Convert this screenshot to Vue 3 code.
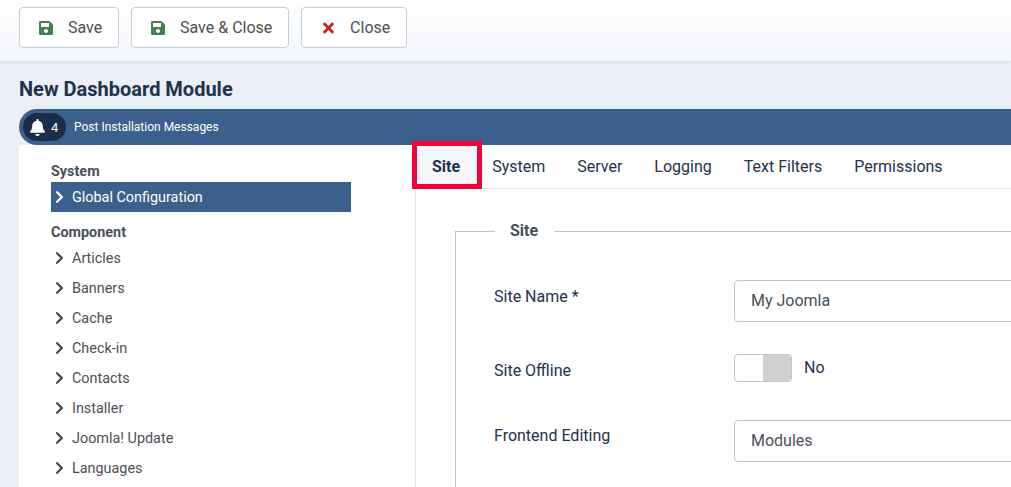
<script setup>
const save = 'M433.941 129.941l-83.882-83.882A48 48 0 0 0 316.118 32H48C21.49 32 0 53.49 0 80v352c0 26.51 21.49 48 48 48h352c26.51 0 48-21.49 48-48V163.882a48 48 0 0 0-14.059-33.941zM224 416c-35.346 0-64-28.654-64-64 0-35.346 28.654-64 64-64s64 28.654 64 64c0 35.346-28.654 64-64 64zm96-304.52V212c0 6.627-5.373 12-12 12H76c-6.627 0-12-5.373-12-12V108c0-6.627 5.373-12 12-12h228.52c3.183 0 6.235 1.264 8.485 3.515l3.48 3.48A11.996 11.996 0 0 1 320 111.48z'
const chevron = 'M285.476 272.971L91.132 467.314c-9.373 9.373-24.569 9.373-33.941 0l-22.667-22.667c-9.357-9.357-9.375-24.522-.04-33.901L188.505 256 34.484 101.255c-9.335-9.379-9.317-24.544.04-33.901l22.667-22.667c9.373-9.373 24.569-9.373 33.941 0L285.475 239.03c9.373 9.372 9.373 24.568.001 33.941z'
const components = ['Articles', 'Banners', 'Cache', 'Check-in', 'Contacts', 'Installer', 'Joomla! Update', 'Languages']
const tabs = ['Site', 'System', 'Server', 'Logging', 'Text Filters', 'Permissions']
</script>

<template>
  <div class="page">
    <header class="toolbar">
      <button class="btn">
        <svg class="ic-save" viewBox="0 0 448 512"><path :d="save" /></svg>
        <span>Save</span>
      </button>
      <button class="btn">
        <svg class="ic-save" viewBox="0 0 448 512"><path :d="save" /></svg>
        <span>Save &amp; Close</span>
      </button>
      <button class="btn">
        <svg class="ic-close" viewBox="0 0 352 512"><path d="M242.72 256l100.07-100.07c12.28-12.28 12.28-32.19 0-44.48l-22.24-22.24c-12.28-12.28-32.19-12.28-44.48 0L176 189.28 75.93 89.21c-12.28-12.28-32.19-12.28-44.48 0L9.21 111.45c-12.28 12.28-12.28 32.19 0 44.48L109.28 256 9.21 356.07c-12.28 12.28-12.28 32.19 0 44.48l22.24 22.24c12.28 12.28 32.2 12.28 44.48 0L176 322.72l100.07 100.07c12.28 12.28 32.2 12.28 44.48 0l22.24-22.24c12.28-12.28 12.28-32.19 0-44.48L242.72 256z" /></svg>
        <span>Close</span>
      </button>
    </header>

    <h1 class="title">New Dashboard Module</h1>

    <div class="content">
      <div class="msgbar">
        <div class="badge">
          <svg class="ic-bell" viewBox="0 0 448 512"><path d="M224 512c35.32 0 63.97-28.65 63.97-64H160.03c0 35.35 28.65 64 63.97 64zm215.39-149.71c-19.32-20.76-55.47-51.99-55.47-154.29 0-77.7-54.48-139.9-127.94-155.16V32c0-17.67-14.32-32-31.98-32s-31.98 14.33-31.98 32v20.84C118.56 68.1 64.08 130.3 64.08 208c0 102.3-36.15 133.53-55.47 154.29-6 6.45-8.66 14.16-8.61 21.71.11 16.4 12.98 32 32.1 32h383.8c19.12 0 32-15.6 32.1-32 .05-7.55-2.61-15.27-8.61-21.71z" /></svg>
          <span>4</span>
        </div>
        <span class="msgtext">Post Installation Messages</span>
      </div>

      <div class="card">
        <aside class="sidebar">
          <div class="group first">System</div>
          <div class="item active">
            <svg class="ic-chev" viewBox="0 0 320 512"><path :d="chevron" /></svg>
            <span>Global Configuration</span>
          </div>
          <div class="group">Component</div>
          <div v-for="c in components" :key="c" class="item">
            <svg class="ic-chev" viewBox="0 0 320 512"><path :d="chevron" /></svg>
            <span>{{ c }}</span>
          </div>
        </aside>

        <main class="main">
          <nav class="tabs">
            <div v-for="(t, i) in tabs" :key="t" class="tab" :class="{ current: i === 0 }">
              {{ t }}
              <span v-if="i === 0" class="redbox"></span>
            </div>
          </nav>

          <fieldset class="fs">
            <legend>Site</legend>
            <div class="row r1">
              <label>Site Name *</label>
              <div class="input">My Joomla</div>
            </div>
            <div class="row r2">
              <label>Site Offline</label>
              <div class="switchwrap">
                <div class="switch"><i></i></div>
                <span>No</span>
              </div>
            </div>
            <div class="row r3">
              <label>Frontend Editing</label>
              <div class="input">Modules</div>
            </div>
          </fieldset>
        </main>
      </div>
    </div>
  </div>
</template>

<style>
html, body { margin: 0; overflow: hidden; }
</style>

<style scoped>
.page {
  width: 1011px;
  height: 487px;
  overflow: hidden;
  background: #ebf0f6;
  font-family: Roboto, sans-serif;
  font-size: 16px;
  color: #22314d;
}
.toolbar {
  height: 61px;
  box-sizing: border-box;
  padding: 7px 19px 0;
  display: flex;
  gap: 12px;
  background: linear-gradient(180deg, #ffffff 0%, #f3f6fa 100%);
  box-shadow: 0 1px 4px rgba(60, 90, 130, 0.16);
}
.btn {
  height: 41px;
  box-sizing: border-box;
  display: flex;
  align-items: center;
  gap: 15px;
  padding: 0 15.8px 0 19px;
  background: #fff;
  border: 1px solid #c3ccd9;
  border-radius: 4px;
  color: #495057;
  font: 400 16px Roboto, sans-serif;
}
.ic-save { width: 14px; height: 16px; fill: #457d54; flex: none; }
.ic-close { width: 11px; height: 16px; fill: #c52827; margin: 0 1.5px; flex: none; }
.title {
  margin: 0;
  height: 48px;
  padding: 16px 19px 0;
  box-sizing: border-box;
  font-size: 20px;
  line-height: 24px;
  font-weight: 700;
  color: #22314d;
}
.content {
  margin-left: 19px;
}
.msgbar {
  height: 36px;
  background: #3c608e;
  border-radius: 18px 0 0 18px;
  display: flex;
  align-items: center;
  padding-left: 4px;
  gap: 8px;
  color: #fff;
}
.badge {
  width: 43px;
  height: 28px;
  box-sizing: border-box;
  padding-left: 7px;
  border-radius: 14px;
  background: #1c2d4a;
  display: flex;
  align-items: center;
  gap: 6px;
  font-size: 13px;
}
.ic-bell { width: 15px; height: 17px; fill: #fff; }
.msgtext { font-size: 12px; }
.card {
  display: flex;
  background: #fff;
  border-radius: 4px 0 0 0;
  height: 400px;
}
.sidebar {
  width: 397px;
  flex: none;
  box-sizing: border-box;
  padding: 16px 64px 0 32px;
  border-right: 1px solid #dbe3ee;
  color: #495057;
  font-size: 14.4px;
}
.group {
  font-weight: 700;
  height: 20px;
  line-height: 22px;
  margin-top: 10px;
}
.group.first { margin-top: 0; height: 21px; line-height: 22px; }
.item {
  height: 30px;
  display: flex;
  align-items: center;
  padding-left: 4px;
  gap: 8px;
}
.group + .item:not(.active) { margin-top: 1px; margin-bottom: 0; }
.item.active { background: #3c608e; color: #fff; }
.ic-chev { width: 9px; height: 14px; fill: #3f4a5a; flex: none; }
.item.active .ic-chev { fill: #fff; }
.main {
  flex: 1;
  min-width: 0;
}
.tabs {
  display: flex;
  height: 43px;
  border-bottom: 1px solid #dbe3ee;
  padding-left: 1px;
}
.tab {
  position: relative;
  padding: 0 16px;
  line-height: 43px;
  color: #22314d;
}
.tab.current {
  padding: 0 16px 0 15px;
  background: #f4f7fa;
  font-weight: 700;
}
.redbox {
  position: absolute;
  left: -5px;
  right: -5.6px;
  top: -4px;
  bottom: -1px;
  border: 5px solid #f5003a;
  pointer-events: none;
}
.fs {
  margin: 32px 0 0 39px;
  padding: 0 0 0 38px;
  width: 700px;
  min-width: 700px;
  border: 1px solid #b8c5dc;
  border-right: 0;
  height: 400px;
  box-sizing: border-box;
}
legend {
  padding: 0 15.6px 0 15px;
  margin-left: 1px;
  font-weight: 700;
  color: #495057;
  line-height: 20px;
}
.row {
  display: flex;
}
.row label {
  width: 240px;
  flex: none;
  color: #22314d;
}
.r1 { margin-top: 39px; height: 42px; }
.r1 label { line-height: 34px; }
.r2 { margin-top: 32px; height: 28px; }
.r2 label { line-height: 34px; }
.r3 { margin-top: 38px; height: 42px; }
.r3 label { line-height: 32px; }
.input {
  width: 500px;
  height: 42px;
  box-sizing: border-box;
  border: 1px solid #b8c5dc;
  border-radius: 4px;
  padding: 0 16px;
  line-height: 40px;
  color: #495057;
}
.switchwrap {
  display: flex;
  align-items: flex-start;
  gap: 12px;
  line-height: 28px;
}
.switch {
  width: 58px;
  height: 28px;
  box-sizing: border-box;
  border: 1px solid #b8c5dc;
  border-radius: 4px;
  background: #fff;
  display: flex;
  justify-content: flex-end;
  overflow: hidden;
}
.switch i {
  display: block;
  width: 28px;
  background: #d0d0d0;
}
</style>
